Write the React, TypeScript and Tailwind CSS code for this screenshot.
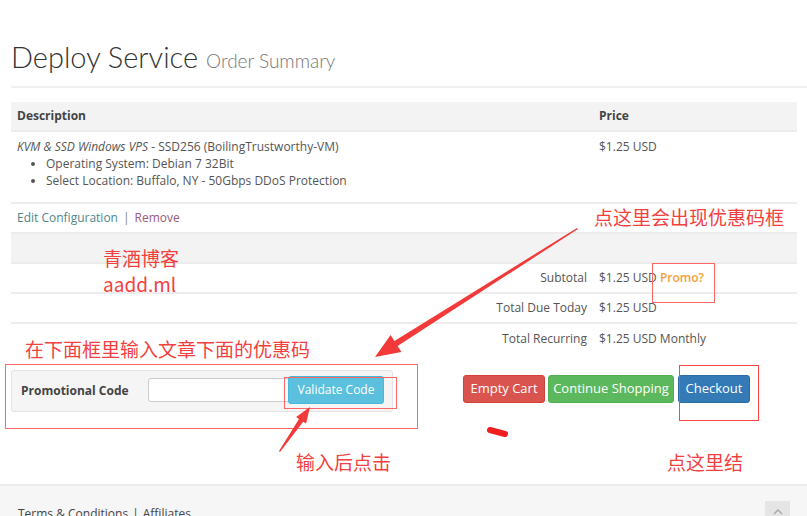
import React from "react";

const body = { fontFamily: '"Open Sans", "Liberation Sans", sans-serif' } as const;
const cjk = { fontFamily: '"Noto Sans CJK SC", "Noto Sans", sans-serif' } as const;

function Annotations() {
  return (
    <div className="absolute inset-0 pointer-events-none" style={cjk}>
      <div className="absolute left-[594px] top-[205px] text-[19px] leading-[24px] text-[#f43f3f] whitespace-nowrap">点这里会出现优惠码框</div>
      <div className="absolute left-[103px] top-[247px] text-[19px] leading-[22px] text-[#f43f3f] whitespace-nowrap">青酒博客</div>
      <div className="absolute left-[103px] top-[273px] text-[19px] leading-[22px] text-[#f43f3f] whitespace-nowrap">aadd.ml</div>
      <div className="absolute left-[25px] top-[337px] text-[19px] leading-[24px] text-[#f43f3f] whitespace-nowrap">在下面框里输入文章下面的优惠码</div>
      <div className="absolute left-[296px] top-[450px] text-[19px] leading-[24px] text-[#f43f3f] whitespace-nowrap">输入后点击</div>
      <div className="absolute left-[667px] top-[450px] text-[19px] leading-[24px] text-[#f43f3f] whitespace-nowrap">点这里结</div>

      <div className="absolute left-[5px] top-[364px] w-[413px] h-[65px] border border-[#f66]" />
      <div className="absolute left-[284px] top-[377px] w-[113px] h-[32px] border border-[#f66]" />
      <div className="absolute left-[652px] top-[263px] w-[63px] h-[40px] border border-[#f66]" />
      <div className="absolute left-[679px] top-[365px] w-[80px] h-[56px] border border-[#f44]" />

      <svg className="absolute left-0 top-0" width="807" height="516" viewBox="0 0 807 516">
        <polygon
          points="577,228 578,229 397.6,346 401.4,351.9 375,357 390.6,335.1 394.4,341"
          fill="#f23a3a"
        />
        <polygon
          points="280,452 303.2,421.7 306.1,423.6 310,407 296.1,417 299,418.9 279,451"
          fill="#f23a3a"
        />
        <line x1="490" y1="430" x2="505" y2="434" stroke="#f01e1e" strokeWidth="6" strokeLinecap="round" />
      </svg>
    </div>
  );
}

export default function App() {
  const rowBorder = "border-b-2 border-[#ececec]";
  return (
    <div className="relative w-[807px] h-[516px] overflow-hidden bg-white text-[#555] text-[12px]" style={body}>
      <div className="pl-[11px] pr-[10px]">
        <div className="pt-[40px] pb-[8px] border-b-2 border-[#f0f0f0] flex items-baseline gap-[8px] -mr-[10px]">
          <span className="text-[29px] leading-[34px] text-[#333] font-light" style={{ fontFamily: 'Lato, "Open Sans", sans-serif' }}>Deploy Service</span>
          <span className="text-[19px] leading-[34px] text-[#777] font-light" style={{ fontFamily: 'Lato, "Open Sans", sans-serif' }}>Order Summary</span>
        </div>

        <div className="mt-[14px] w-[786px]">
          <div className={`grid grid-cols-[582px_204px] h-[30px] items-center bg-[#f3f3f3] ${rowBorder}`}>
            <div className="pl-[6px] font-bold text-[#444]">Description</div>
            <div className="pl-[6px] font-bold text-[#444]">Price</div>
          </div>
          <div className={`grid grid-cols-[582px_204px] h-[72px] pt-[6px] ${rowBorder}`}>
            <div className="pl-[6px] leading-[17px]">
              <div><em>KVM &amp; SSD Windows VPS</em> - SSD256 (BoilingTrustworthy-VM)</div>
              <ul className="list-disc pl-[29px]">
                <li>Operating System: Debian 7 32Bit</li>
                <li>Select Location: Buffalo, NY - 50Gbps DDoS Protection</li>
              </ul>
            </div>
            <div className="pl-[6px] leading-[17px]">$1.25 USD</div>
          </div>
          <div className={`h-[30px] flex items-center pl-[6px] ${rowBorder}`}>
            <span className="text-[#4f8688]">Edit Configuration</span>
            <span className="mx-[5px] text-[#888]">|</span>
            <span className="text-[#9a5a78]">Remove</span>
          </div>
          <div className={`h-[30px] bg-[#f3f3f3] ${rowBorder}`} />
          <div className={`grid grid-cols-[582px_204px] h-[30px] items-center ${rowBorder}`}>
            <div className="text-right pr-[6px]">Subtotal</div>
            <div className="pl-[6px]">$1.25 USD <span className="text-[#f5a13a] font-semibold">Promo?</span></div>
          </div>
          <div className={`grid grid-cols-[582px_204px] h-[30px] items-center ${rowBorder}`}>
            <div className="text-right pr-[6px]">Total Due Today</div>
            <div className="pl-[6px]">$1.25 USD</div>
          </div>
          <div className="grid grid-cols-[582px_204px] h-[30px] items-center">
            <div className="text-right pr-[6px]">Total Recurring</div>
            <div className="pl-[6px]">$1.25 USD Monthly</div>
          </div>
        </div>

        <div className="mt-[16px] flex items-start">
          <div className="w-[382px] h-[42px] rounded-[3px] border border-[#e3e3e3] bg-[#f5f5f5] flex items-center pl-[9px]">
            <span className="font-bold text-[#444] w-[127px]">Promotional Code</span>
            <div className="w-[142px] h-[24px] bg-white border border-[#ccc] rounded-[3px] -mr-[2px] -mt-[3px]" />
            <button className="w-[96px] h-[28px] -mt-[2px] rounded-[3px] bg-[#5bc0de] text-white text-[12px] border border-[#46b8da]">Validate Code</button>
          </div>
          <div className="ml-[70px] mt-[5px] flex gap-[3px] text-[13px]">
            <button className="w-[82px] h-[28px] rounded-[3px] bg-[#d9534f] border border-[#d43f3a] text-white">Empty Cart</button>
            <button className="w-[126px] h-[28px] rounded-[3px] bg-[#5cb85c] border border-[#4cae4c] text-white">Continue Shopping</button>
            <button className="ml-[1px] w-[72px] h-[28px] rounded-[3px] bg-[#337ab7] border border-[#2e6da4] text-white">Checkout</button>
          </div>
        </div>
      </div>

      <div className="absolute left-0 right-0 top-[484px] h-[60px] border-t-2 border-[#ececec] bg-[#f6f6f6]">
        <div className="pl-[18px] pt-[19px] text-[12px] text-[#444] leading-[17px]">
          <span className="underline">Terms &amp; Conditions</span>
          <span className="mx-[4px]">|</span>
          <span>Affiliates</span>
        </div>
        <div className="absolute left-[765px] top-[15px] w-[25px] h-[30px] bg-[#e5e5e5] flex justify-center pt-[8px]">
          <svg width="10" height="6" viewBox="0 0 10 6"><path d="M1 5 L5 1 L9 5" stroke="#aaa" strokeWidth="1.5" fill="none" /></svg>
        </div>
      </div>

      <Annotations />
    </div>
  );
}
